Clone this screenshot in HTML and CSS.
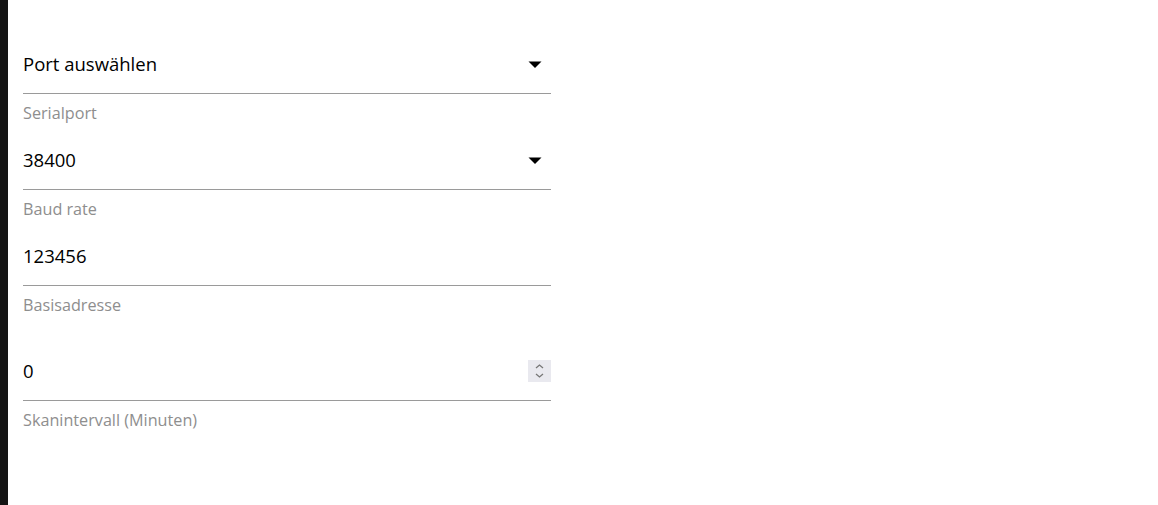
FILE: index.html
```html
<!DOCTYPE html>
<html lang="de">
<head>
<meta charset="utf-8">
<link rel="stylesheet" href="styles.css">
</head>
<body>
<div class="sidebar"></div>
<main class="form">
  <div class="field">
    <div class="control">
      <span class="value">Port auswählen</span>
      <svg class="caret" width="14" height="7" viewBox="0 0 14 7"><path d="M0.5 0.5 H13.5 L7 7 Z" fill="#000"/></svg>
    </div>
    <div class="label">Serialport</div>
  </div>
  <div class="field">
    <div class="control">
      <span class="value">38400</span>
      <svg class="caret" width="14" height="7" viewBox="0 0 14 7"><path d="M0.5 0.5 H13.5 L7 7 Z" fill="#000"/></svg>
    </div>
    <div class="label">Baud rate</div>
  </div>
  <div class="field">
    <div class="control">
      <span class="value">123456</span>
    </div>
    <div class="label">Basisadresse</div>
  </div>
  <div class="field field-tall">
    <div class="control">
      <span class="value">0</span>
      <span class="spinner">
        <svg width="23" height="22" viewBox="0 0 23 22"><path d="M8 8 L11.5 5 L15 8" fill="none" stroke="#777" stroke-width="1.3"/><path d="M8 14 L11.5 17 L15 14" fill="none" stroke="#777" stroke-width="1.3"/></svg>
      </span>
    </div>
    <div class="label">Skanintervall (Minuten)</div>
  </div>
</main>
</body>
</html>
```
FILE: styles.css
```css
html, body {
  margin: 0;
  padding: 0;
  height: 100%;
  background: #fff;
}
body {
  display: flex;
  font-family: "Open Sans", "Noto Sans", sans-serif;
}
.sidebar {
  width: 8px;
  flex: none;
  background: #141414;
  height: 100vh;
}
.form {
  padding: 27px 0 0 15px;
  width: 528px;
}
.field {
  padding-top: 25px;
}
.field-tall {
  padding-top: 44px;
}
.control {
  display: flex;
  align-items: center;
  justify-content: space-between;
  height: 24px;
  padding-bottom: 17px;
  border-bottom: 1px solid #9a9a9a;
}
.value {
  font-size: 18.5px;
  line-height: 24px;
  color: #000;
}
.caret {
  margin-right: 9px;
}
.spinner {
  display: flex;
  width: 23px;
  height: 22px;
  background: #e9e9ef;
}
.label {
  margin-top: 9px;
  font-size: 16.2px;
  line-height: 20px;
  color: #8e8e8e;
}
```
